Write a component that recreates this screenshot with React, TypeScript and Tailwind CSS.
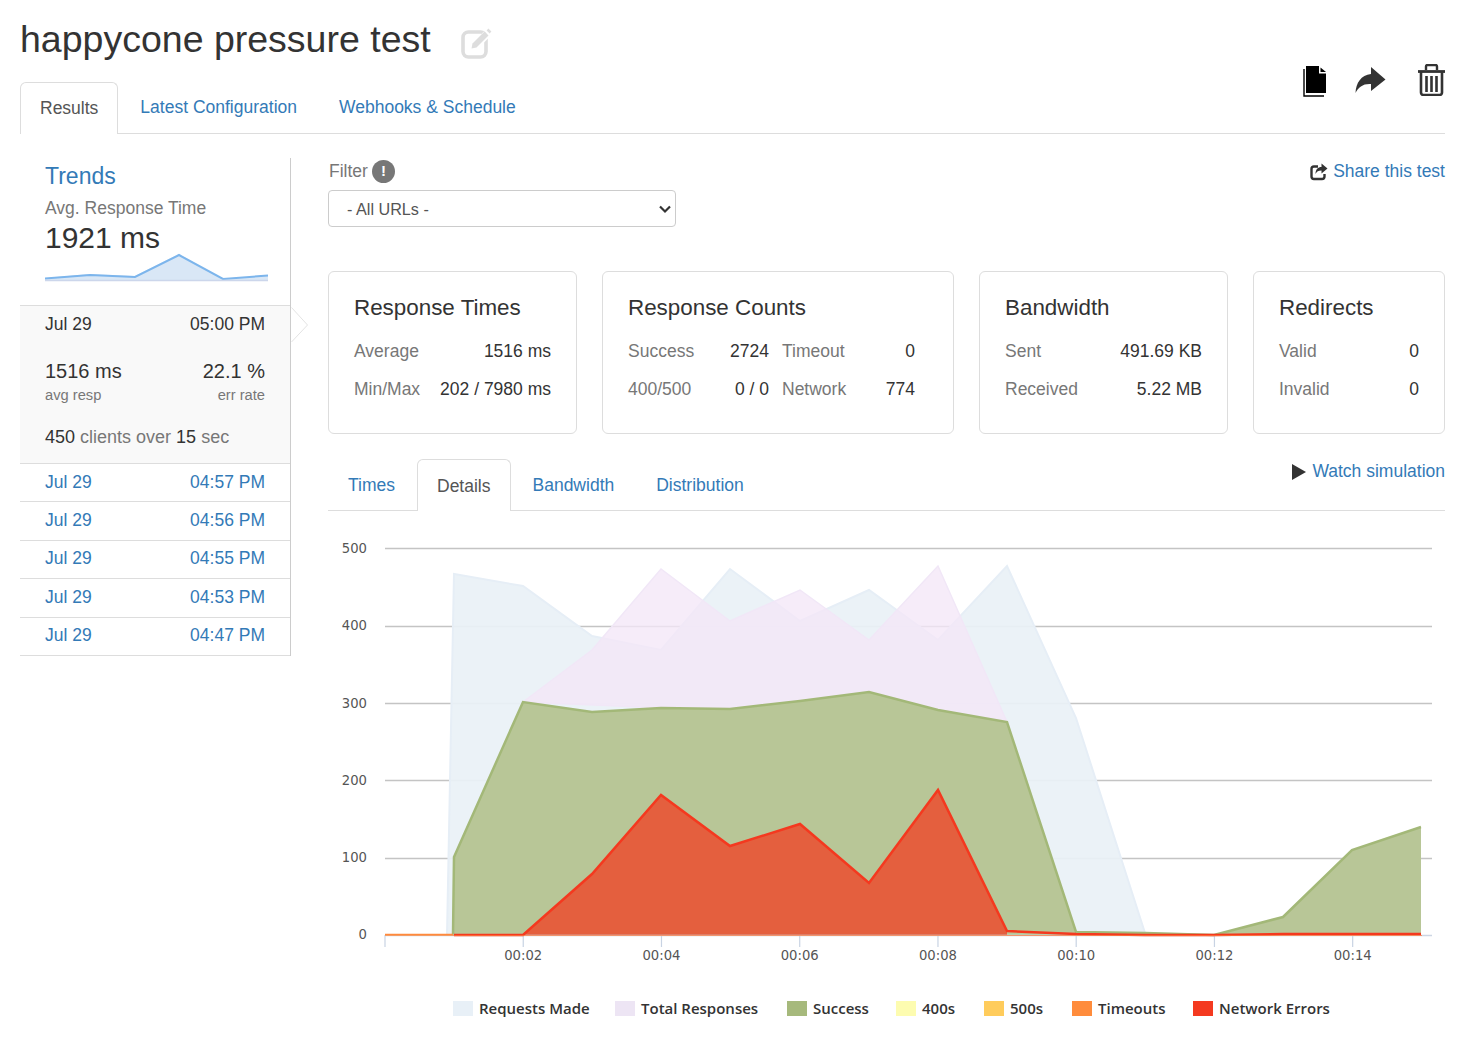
import React from "react";

const FONT = "[font-family:'Liberation_Sans',Arial,sans-serif]";
const sx = (s: number) => 385 + s * 69.12 - 328;
const OY = 530;
const p = (pts: [number, number][]) => pts.map(([x, y]) => `${x - 328},${y - OY}`).join(" ");

const requests: [number, number][] = [[447, 935], [454, 574], [523, 586], [592, 636], [661, 650], [730, 569], [800, 621], [869, 590], [938, 640], [1007, 566], [1076, 718], [1145, 933], [1214, 935]];
const totals: [number, number][] = [[523, 702], [592, 650], [661, 569], [730, 621], [800, 590], [869, 640], [938, 566], [1007, 722]];
const success: [number, number][] = [[453, 935], [454, 857], [523, 702], [592, 712], [661, 708], [730, 709], [800, 701], [869, 692], [938, 710], [1007, 722], [1076, 932], [1145, 933], [1214, 935], [1283, 917], [1352, 850], [1421, 827], [1421, 935]];
const errors: [number, number][] = [[454, 935], [523, 935], [592, 874], [661, 795], [730, 846], [800, 824], [869, 883], [938, 790], [1007, 931], [1076, 934], [1145, 935], [1214, 935], [1283, 934], [1352, 934], [1421, 934]];

const history = ["04:57 PM", "04:56 PM", "04:55 PM", "04:53 PM", "04:47 PM"];

function Card({ title, className, children }: { title: string; className: string; children: React.ReactNode }) {
  return (
    <div className={`h-[163px] rounded-[6px] border border-[#ddd] pl-[25px] pr-[25px] pt-[21px] ${className}`}>
      <div className="mb-[9px] text-[22.4px] leading-[30px] text-[#333]">{title}</div>
      {children}
    </div>
  );
}

function Row({ label, value }: { label: string; value: string }) {
  return (
    <div className="flex h-[38px] items-center justify-between">
      <span className="text-[#777]">{label}</span>
      <span className="text-[#333]">{value}</span>
    </div>
  );
}

function Chart() {
  return (
    <svg width="1117" height="450" viewBox="0 0 1117 450" className="block">
      {[548, 626, 703, 780, 858].map((y) => (
        <line key={y} x1={57} x2={1104} y1={y - OY + 0.5} y2={y - OY + 0.5} stroke="#c4c4c4" strokeWidth="1.3" />
      ))}
      {[["500", 548], ["400", 625], ["300", 703], ["200", 780], ["100", 857], ["0", 934]].map(([t, y]) => (
        <text key={t} x="39" y={Number(y) - OY + 5} textAnchor="end" fontSize="13.2" fill="#555" fontFamily="'DejaVu Sans',sans-serif">{t}</text>
      ))}
      <polygon points={p(requests)} fill="#e9f1f6" stroke="#e6eef6" strokeWidth="2" fillOpacity="0.93" />
      <polygon points={p(totals)} fill="#f3e7f7" stroke="#f1e7f7" strokeWidth="1.5" fillOpacity="0.78" />
      <polygon points={p(success)} fill="#b8c697" />
      <polyline points={p(success.slice(0, -1))} fill="none" stroke="#a3b878" strokeWidth="2.5" />
      <polygon points={p(errors.slice(0, 9).concat([[1007, 935]]))} fill="#e45f3e" />
      <line x1={57} x2={1104} y1={405.5} y2={405.5} stroke="#cdd6e4" strokeWidth="1.5" />
      {[2, 4, 6, 8, 10, 12, 14].map((s) => (
        <g key={s}>
          <line x1={sx(s)} x2={sx(s)} y1={405} y2={417} stroke="#c8d3e3" strokeWidth="1.2" />
          <text x={sx(s)} y={430} textAnchor="middle" fontSize="13.2" fill="#555" fontFamily="'DejaVu Sans',sans-serif">{`00:${String(s).padStart(2, "0")}`}</text>
        </g>
      ))}
      <line x1={57} x2={57} y1={405} y2={417} stroke="#c8d3e3" strokeWidth="1.2" />
      <line x1={57} x2={125} y1={404.7} y2={404.7} stroke="#ff8a3c" strokeWidth="2" />
      <polyline points={p(errors)} fill="none" stroke="#f4391f" strokeWidth="2.5" />
      <line x1={125} x2={1094} y1={405.5} y2={405.5} stroke="#ff7a3c" strokeWidth="1" strokeOpacity="0.7" />
    </svg>
  );
}

const legend = [
  ["Requests Made", "bg-[#e8f0f7]", "w-[162px]"],
  ["Total Responses", "bg-[#ede5f4]", "w-[172px]"],
  ["Success", "bg-[#a6b97c]", "w-[109px]"],
  ["400s", "bg-[#fdfcb0]", "w-[88px]"],
  ["500s", "bg-[#ffcc5c]", "w-[88px]"],
  ["Timeouts", "bg-[#ff8c3c]", "w-[121px]"],
  ["Network Errors", "bg-[#f43a20]", ""],
];

export default function App() {
  return (
    <div className={`${FONT} w-[1477px] h-[1047px] overflow-hidden bg-white pl-[20px] pr-[32px] text-[17.5px] text-[#333]`}>
      <div className="flex h-[82px] items-start pt-[15px]">
        <h1 className="text-[37.5px] leading-[48px] text-[#333]">happycone pressure test</h1>
        <svg width="32" height="32" viewBox="0 0 32 32" className="ml-[30px] mt-[12px]">
          <rect x="2" y="5" width="23" height="25" rx="5.500" fill="none" stroke="#ddd" strokeWidth="3.600" />
          <path d="M12 21L26 7" stroke="#fff" strokeWidth="8" />
          <path d="M10.500 21.500l1-5 12-12 4 4-12 12z" fill="#ddd" />
          <path d="M26.500 2.500l3 3" stroke="#ddd" strokeWidth="2.500" />
        </svg>
      </div>

      <div className="relative flex h-[52px] border-b border-[#ddd]">
        <div className="mb-[-1px] flex h-[52px] items-center rounded-t-[6px] border border-b-0 border-[#ddd] bg-white px-[19px] pb-[1px] text-[#555]">Results</div>
        <div className="ml-[2px] flex items-center px-[20px] pb-[1px] text-[#337ab7]">Latest Configuration</div>
        <div className="ml-[2px] flex items-center px-[20px] pb-[1px] text-[#337ab7]">Webhooks &amp; Schedule</div>
        <div className="absolute right-0 top-[-18px] flex items-start">
          <svg width="24" height="31" viewBox="0 0 24 31" className="mr-[28px] mt-[2px]">
            <path d="M3 0h13v7.500h7V27H3z" fill="#000" />
            <path d="M17.500 1.500L23 6h-5.500z" fill="#000" />
            <path d="M1 3v27h20" fill="none" stroke="#000" strokeWidth="1.400" />
          </svg>
          <svg width="31" height="27" viewBox="0 0 31 27" className="mr-[32px] mt-[3px]">
            <path d="M16 0l14.500 12.500L16 24v-7C8 16.500 3.500 20 0.500 26 1 16 6 8 16 7z" fill="#333" />
          </svg>
          <svg width="27" height="32" viewBox="0 0 27 32" fill="none" stroke="#333">
            <path d="M0 7.500h27" strokeWidth="2.800" />
            <path d="M8 6V2.500A1.500 1.500 0 0 1 9.500 1h8A1.500 1.500 0 0 1 19 2.500V6" strokeWidth="2.400" />
            <path d="M3 7v21.500A2.500 2.500 0 0 0 5.500 31h16a2.500 2.500 0 0 0 2.500-2.500V7" strokeWidth="2.600" />
            <path d="M8.500 12v16M13.500 12v16M18.500 12v16" strokeWidth="2.600" />
          </svg>
        </div>
      </div>

      <div className="mt-[24px] flex items-start">
        <aside className="h-[498px] w-[271px] shrink-0 border-r border-[#ccc]">
          <div className="h-[147px] pl-[25px] pr-[22px]">
            <div className="pt-[1px] text-[23px] leading-[34px] text-[#337ab7]">Trends</div>
            <div className="mt-[3px] text-[#777] leading-[24px]">Avg. Response Time</div>
            <div className="text-[30px] leading-[36px] text-[#333]">1921 ms</div>
            <svg width="224" height="34" viewBox="0 0 224 34" className="mt-[-5px] block">
              <polygon points="0,27 45,23 90,25 134,3 178,28 223,24 223,29 0,29" fill="#d9e7f6" />
              <polyline points="0,27.500 45,24 90,26 134,4 178,28 223,24.500" fill="none" stroke="#7cb5ec" strokeWidth="2" />
              <line x1="0" x2="223" y1="29.500" y2="29.500" stroke="#ccd6eb" strokeWidth="1.500" />
            </svg>
          </div>
          <div className="relative h-[159px] border-y border-[#ddd] bg-[#f9f9f9] pl-[25px] pr-[25px]">
            <div className="flex justify-between pt-[6px] leading-[24px]"><span>Jul 29</span><span>05:00 PM</span></div>
            <div className="mt-[21px] flex justify-between text-[20px] leading-[28px]"><span>1516 ms</span><span>22.1 %</span></div>
            <div className="flex justify-between text-[14.7px] leading-[20px] text-[#777]"><span>avg resp</span><span>err rate</span></div>
            <div className="mt-[20px] text-[18px] leading-[24px] text-[#777]"><span className="text-[#333]">450</span> clients over <span className="text-[#333]">15</span> sec</div>
            <svg width="18" height="36" viewBox="0 0 18 36" className="absolute left-[271px] top-[1px]">
              <path d="M0.500 0.500L16.500 18 0.500 35" fill="#fff" stroke="#e3e3e3" />
            </svg>
          </div>
          {history.map((t) => (
            <div key={t} className="flex h-[38.4px] items-center justify-between border-b border-[#ddd] pb-[2px] pl-[25px] pr-[25px] text-[#337ab7]">
              <span>Jul 29</span><span>{t}</span>
            </div>
          ))}
        </aside>

        <main className="ml-[37px] min-w-0 flex-1">
          <div className="flex items-start justify-between">
            <div>
              <div className="flex h-[27px] items-center pl-[1px] text-[#777]">
                <span>Filter</span>
                <span className="ml-[4px] flex h-[23px] w-[23px] items-center justify-center rounded-full bg-[#777] text-[15px] font-bold text-white">!</span>
              </div>
              <div className="relative mt-[5px] h-[37px] w-[348px]">
                <select className="block h-[37px] w-full appearance-none rounded-[4px] border border-[#ccc] bg-white pl-[18px] pt-[1px] text-[16.200px] text-[#555]">
                  <option>- All URLs -</option>
                </select>
                <svg width="14" height="10" viewBox="0 0 14 10" className="pointer-events-none absolute right-[4px] top-[14px]">
                  <path d="M2 2.500l5 5 5-5" fill="none" stroke="#333" strokeWidth="2.200" />
                </svg>
              </div>
            </div>
            <div className="flex h-[27px] items-center text-[#337ab7]">
              <svg width="18" height="18" viewBox="0 0 18 18" className="mr-[5px]" fill="none">
                <path d="M8 3.500H4A2.500 2.500 0 0 0 1.500 6v7.500A2.500 2.500 0 0 0 4 16h8a2.500 2.500 0 0 0 2.500-2.500V11" stroke="#333" strokeWidth="2.400" />
                <path d="M11.500 0.500l6 5-6 5V7.500C8.500 7.500 6.500 8.500 5.500 11c0-4.500 2.500-7 6-7z" fill="#333" />
              </svg>
              Share this test
            </div>
          </div>

          <div className="mt-[44px] flex gap-[25px]">
            <Card title="Response Times" className="w-[249px]">
              <Row label="Average" value="1516 ms" />
              <Row label="Min/Max" value="202 / 7980 ms" />
            </Card>
            <Card title="Response Counts" className="w-[352px]">
              <div className="flex">
                <div className="w-[141px]">
                  <Row label="Success" value="2724" />
                  <Row label="400/500" value="0 / 0" />
                </div>
                <div className="ml-[13px] w-[133px]">
                  <Row label="Timeout" value="0" />
                  <Row label="Network" value="774" />
                </div>
              </div>
            </Card>
            <Card title="Bandwidth" className="w-[249px]">
              <Row label="Sent" value="491.69 KB" />
              <Row label="Received" value="5.22 MB" />
            </Card>
            <Card title="Redirects" className="flex-1">
              <Row label="Valid" value="0" />
              <Row label="Invalid" value="0" />
            </Card>
          </div>

          <div className="relative mt-[25px] flex h-[52px] border-b border-[#ddd]">
            <div className="flex items-center px-[20px] pt-[2px] text-[#337ab7]">Times</div>
            <div className="mb-[-1px] ml-[2px] flex h-[52px] items-center rounded-t-[6px] border border-b-0 border-[#ddd] bg-white px-[19px] pt-[2px] text-[#555]">Details</div>
            <div className="ml-[2px] flex items-center px-[20px] pt-[2px] text-[#337ab7]">Bandwidth</div>
            <div className="ml-[2px] flex items-center px-[20px] pt-[2px] text-[#337ab7]">Distribution</div>
            <div className="absolute right-0 top-0 flex h-[25px] items-center text-[#337ab7]">
              <svg width="14" height="16" viewBox="0 0 14 16" className="mr-[6px]"><path d="M0 0l14 8-14 8z" fill="#333" /></svg>
              Watch simulation
            </div>
          </div>

          <div className="mt-[19px]"><Chart /></div>

          <div className="ml-[125px] mt-[19px] flex text-[15px] font-semibold text-[#333] [font-family:'Open_Sans',sans-serif]">
            {legend.map(([name, c, w]) => (
              <div key={name} className={`flex items-center gap-[6px] leading-[18px] ${w}`}>
                <span className={`h-[15px] w-[20px] ${c}`} />
                {name}
              </div>
            ))}
          </div>
        </main>
      </div>
    </div>
  );
}
